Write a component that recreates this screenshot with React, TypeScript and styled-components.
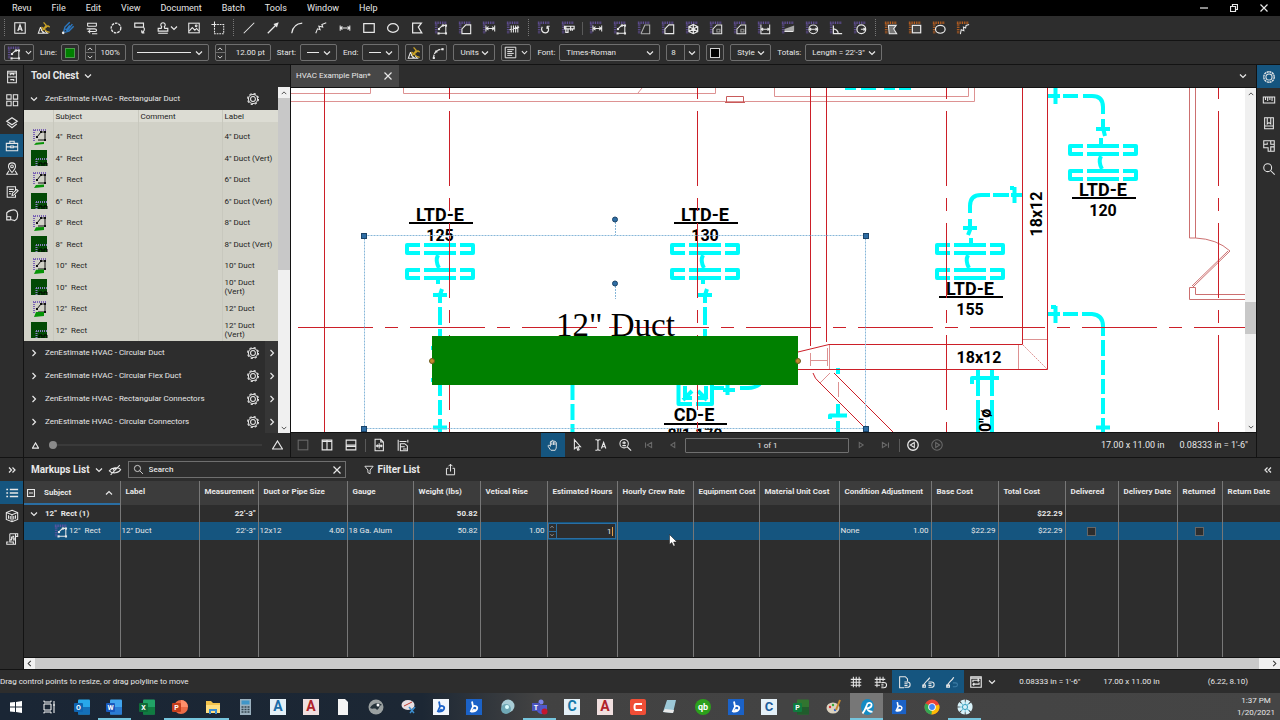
import React from 'react';
import styled, { createGlobalStyle, css } from 'styled-components';

const c = {
  bg: '#2d2d2d',
  raised: '#3c3c3c',
  edge: '#131313',
  line: '#777777',
  box: '#6f6f6f',
  text: '#e8e8e8',
  dim: '#6a6a6a',
  accent: '#15557f',
  purple: '#6a55a8',
  orange: '#d2691e',
};

const GlobalStyle = createGlobalStyle`
  * { box-sizing: border-box; }
  body {
    margin: 0;
    background: ${c.bg};
    color: ${c.text};
    font-family: Roboto, "Liberation Sans", sans-serif;
    font-size: 8px;
    line-height: 12px;
  }
  button, input, select {
    font: inherit;
    color: inherit;
    background: none;
    border: 0;
    padding: 0;
    margin: 0;
    min-width: 0;
  }
  button { display: flex; align-items: center; justify-content: center; }
  svg { display: block; flex: none; }
  table { border-collapse: collapse; }
`;

/* ---------- icons ---------- */

const Svg = styled.svg`
  fill: none;
  stroke: currentColor;
  stroke-width: 1.2;
`;

const solid = { fill: 'currentColor', stroke: 'none' };

function Ruler({ color = c.purple }: { color?: string }) {
  return (
    <g stroke={color} strokeWidth="3" strokeDasharray="1 1">
      <path d="M1 2H15" />
      <path d="M2.500 3V15" />
    </g>
  );
}

const nodes = (pts: number[][]) =>
  pts.map(([x, y]) => <rect key={`${x}-${y}`} x={x - 1} y={y - 1} width="2.400" height="2.400" {...solid} />);

const art: Record<string, React.ReactNode> = {
  textbox: (
    <>
      <rect x="2" y="2" width="12" height="12" />
      <path d="M5.500 11.500L8 4.500L10.500 11.500M6.500 9.300H9.500" strokeWidth="1.500" />
    </>
  ),
  penYellow: (
    <>
      <path d="M4 7L1.500 14H12L9.500 11.500M4 7L7 13.500M4.500 10.500L9 14" />
      <path d="M7.500 1.500L10.500 5L8 9L12.500 5.500L14.500 7M8 9L5 7M8 9L11 12L14.500 13M10.500 5L6 11" stroke="#c9a227" strokeWidth="1.500" />
    </>
  ),
  penBlue: (
    <>
      <path d="M3 12.500L4.500 7L10 1.500M4 13L9 11.500L14.500 6M5 9L7 11L13 3.500M6.500 9.500L10 5" stroke="#2b78c2" strokeWidth="1.600" />
      <circle cx="2.500" cy="13.500" r="1.500" {...solid} />
    </>
  ),
  note: <path d="M3 6V2.500H13V6M3 6H13M2 9H11C14 9 14 12 11 12H4L6 10M4 12L6 14M8 14.500H14" />,
  cloudCircle: <circle cx="8" cy="8" r="5.500" strokeDasharray="3 1" strokeWidth="1.500" />,
  callout: <path d="M2 2.500H12V7H2ZM12 7C14 9 13 12 10 13.500M10 13.500V10.500M10 13.500H13" strokeWidth="1.300" />,
  stamp: (
    <>
      <path d="M6 8.500L6.500 6.500A2.500 2.500 0 1 1 9.500 6.500L10 8.500H13.500V11.500H2.500V8.500Z" strokeWidth="1.300" />
      <path d="M2.500 14H13.500" />
    </>
  ),
  image: (
    <>
      <rect x="2" y="2.500" width="12" height="11" />
      <path d="M2.500 11.500L6 7.500L9 10.500L11 8.500L13.500 11.500" />
      <circle cx="10.500" cy="5.500" r="1" />
    </>
  ),
  snapshot: (
    <>
      <rect x="4" y="4" width="10.500" height="10.500" strokeDasharray="2 1" />
      <path d="M0.500 4H6M4 0.500V6" />
    </>
  ),
  line: <path d="M2 14L14 2" />,
  arrow: (
    <>
      <path d="M2 14L12 4" strokeWidth="1.400" />
      <path d="M14.500 1.500L8.500 3.500L12.500 7.500Z" {...solid} />
    </>
  ),
  arc: <path d="M2 14C3 7 7 3 14 2.500" strokeWidth="1.400" />,
  polyline: <path d="M2 14L4 9L7 10L5.500 6L10 7L9 4L14 2" />,
  dimension: <path d="M2.500 5V11M13.500 5V11M3 8H13M5 6L3 8L5 10M11 6L13 8L11 10" />,
  rect: <rect x="2" y="3" width="12" height="10" strokeWidth="1.400" />,
  ellipse: <ellipse cx="8" cy="8" rx="6.200" ry="5" strokeWidth="1.400" />,
  polygon: <path d="M3 2.500H13L9.500 7L13.500 13.500H3Z" strokeWidth="1.400" />,
  rPolylength: (
    <>
      <Ruler />
      <path d="M5 14H13.500V5H10L5.500 9" />
      {nodes([[5, 14], [13.5, 14], [13.5, 5], [10, 5], [5.5, 9]])}
    </>
  ),
  rArea: (
    <>
      <Ruler />
      <path d="M4.500 14.500V9L9 4.500H14.500V14.500Z" strokeWidth="1.300" />
    </>
  ),
  rPerimeter: (
    <>
      <Ruler />
      <path d="M4.500 14.500L9 4.500H14.500V14.500H4.500" stroke="#b0b0b0" />
    </>
  ),
  rLength: (
    <>
      <Ruler />
      <path d="M4.500 5V12M14.500 5V12M5 8.500H14M7.500 6.500L5 8.500L7.500 10.500M11.500 6.500L14 8.500L11.500 10.500" />
    </>
  ),
  rCount: (
    <>
      <Ruler />
      <path d="M6 5V13M8.500 5V13M11 5V13M13.500 5V13M4 10L15 7" />
    </>
  ),
  rRotate: (
    <>
      <Ruler />
      <path d="M6 6.500C4 10 6 13.500 9.500 13.500C13.500 13.500 14.500 8.500 11.500 6M11.500 6H14.500M11.500 6V9" strokeWidth="1.400" />
    </>
  ),
  rCaliper: (
    <>
      <Ruler />
      <path d="M4 6H15V9H4ZM5.500 6V13H8V9M11 6V11M13 9V11" strokeWidth="1.400" />
    </>
  ),
  rVolume: (
    <>
      <Ruler />
      <path d="M9.500 4L14.500 6.500V12L9.500 14.500L4.500 12V6.500ZM4.500 6.500L9.500 9L14.500 6.500M9.500 9V14.500M4.500 12L9.500 9L14.500 12M9.500 4V9" strokeWidth="1.400" />
    </>
  ),
  rCutout: (
    <>
      <Ruler />
      <path d="M4.500 14.500V9L9 4.500H14.500V14.500Z" />
      <path d="M9 12.500V9.500H12.500V12.500Z" stroke="#999999" />
    </>
  ),
  rWidth: (
    <>
      <Ruler />
      <path d="M4.500 4V14.500H14.500V4M5 9.500H14M7 8L5 9.500L7 11M12 8L14 9.500L12 11" />
    </>
  ),
  rSlope: (
    <>
      <Ruler />
      <path d="M4 12V9L15 5V12Z" fill="#a8a8a8" stroke="none" />
      <path d="M4 12H14" />
    </>
  ),
  rDiameter: (
    <>
      <Ruler />
      <circle cx="9.500" cy="9.500" r="5" />
      <path d="M5 9.500H14M7 8L5 9.500L7 11M12 8L14 9.500L12 11" />
    </>
  ),
  rAngle: (
    <>
      <Ruler />
      <path d="M5 5V14.500H15M5 9C8 9 10.500 11.500 10.500 14.500" strokeWidth="1.400" />
    </>
  ),
  rRadius: (
    <>
      <Ruler />
      <circle cx="9.500" cy="9.500" r="5" strokeWidth="1.400" />
      <path d="M9 9.500H14M12 8L14 9.500L12 11" />
    </>
  ),
  oPolygon: (
    <>
      <Ruler color={c.orange} />
      <path d="M5 5H14L11 9L14.500 14.500H6Z" fill="#777777" />
    </>
  ),
  oRect: (
    <>
      <Ruler color={c.orange} />
      <rect x="5" y="5" width="9.500" height="8.500" fill="#444444" strokeWidth="1.400" />
    </>
  ),
  oEllipse: (
    <>
      <Ruler color={c.orange} />
      <ellipse cx="9.500" cy="9.500" rx="5.500" ry="4.500" strokeWidth="1.400" />
    </>
  ),
  oPoly: (
    <>
      <Ruler color={c.orange} />
      <path d="M5 15L6 10L9 11L8.500 7L11 8L11.500 5L15 4" />
    </>
  ),
  thumbs: <path d="M2 2H7V7H2ZM9.500 2H14.500V7H9.500ZM2 9.500H7V14.500H2ZM9.500 9.500H14.500V14.500H9.500Z" />,
  fileCabinet: <path d="M3 1.500H13V14.500H3ZM3 8H13M6 4.500H10V6M6 6V4.500M6 11H10V12.500M3 3.500H13" />,
  layers: <path d="M8 2L14 6L8 10L2 6ZM2.500 9L8 13.500L13.500 9" strokeWidth="1.400" />,
  toolbox: <path d="M1.500 5H14.500V13.500H1.500ZM5.500 5V2.500H10.500V5M1.500 9H6.500M9.500 9H14.500M6.500 8H9.500V10H6.500Z" />,
  places: (
    <>
      <path d="M8 12C5 8.500 4 7 4 5A4 4 0 0 1 12 5C12 7 11 8.500 8 12Z" />
      <circle cx="8" cy="5" r="1.500" />
      <path d="M4.500 10L2 14H14L11.500 10" />
    </>
  ),
  editList: <path d="M12 6V2H2.500V14H12V11M4.500 5H10M4.500 7.500H9M4.500 10H7M8 12L8.500 9.500L13.500 5L15 6.500L10 11.500Z" />,
  shapes: <path d="M2 10V5.500C4 3 9 1.500 12 2.500C14.500 4 15 8 13.500 12.500L11 14.500C9.500 14 8 13 6.500 13.500V10ZM2 10V13.500H6.500" strokeWidth="1.300" />,
  list: <path d="M1.500 4H3.500M1.500 8H3.500M1.500 12H3.500M5.500 4H15M5.500 8H15M5.500 12H15" strokeWidth="1.800" />,
  model: <path d="M8 1.500L14.500 4V12L8 14.500L1.500 12V4ZM1.500 4L8 6.500L14.500 4M8 6.500V14.500M4 7V11M6 8V12M10 8V12M12 7V11" />,
  script: <path d="M5.500 2H14.500V5H12V14H2V11.500H4M5.500 2V11.500H9.500V14M12 5V2M7.500 5V9H6M10.500 5H9V7H10.500V9H9" />,
  rulerPanel: <path d="M1.500 4.500H14.500V11.500H1.500ZM4 4.500V8M6.500 4.500V9M9 4.500V8M11.500 4.500V9" />,
  bookmark: <path d="M3 2H13V14.500H3ZM6 2V9L8 7.500L10 9V2M3 11.500H13" />,
  compare: <path d="M2 2H14V9H10V14H7V10H2ZM2 6H6V4M10 2V6H14M10 14H14V9" />,
  search: (
    <>
      <circle cx="6.500" cy="6.500" r="4.500" />
      <path d="M10 10L14.500 14.500" />
    </>
  ),
  gear: (
    <>
      <circle cx="8" cy="8" r="5.200" />
      <circle cx="8" cy="8" r="6.200" strokeDasharray="2.500 2.370" strokeWidth="1.300" />
      <circle cx="8" cy="8" r="2.800" />
    </>
  ),
  single: <rect x="2.500" y="2.500" width="11" height="11" />,
  splitV: <path d="M2.500 2.500H13.500V13.500H2.500ZM8 2.500V13.500M2.500 4H13.500" strokeWidth="1.300" />,
  splitH: <path d="M2.500 2.500H13.500V13.500H2.500ZM2.500 8H13.500M2.500 9.500H13.500" strokeWidth="1.300" />,
  fitPage: <path d="M3.500 1.500H10L13 4.500V14.500H3.500ZM10 1.500V4.500H13M5 9H11.500M8.200 6V12M6.500 7.500L5 9L6.500 10.500M10 7.500L11.500 9L10 10.500" />,
  fitWidth: <path d="M2.500 2V14.500M13.500 2V5M4 4H12M5 6.500H10L13 9V14.500H5ZM5 10H10M8 12.500H12" />,
  hand: <path d="M5 13.500L2.500 9.500C2 8.500 3 8 4 8.500L5 9.500V4.500C5 3.500 6.500 3.500 6.500 4.500V3.500C6.500 2.500 8.200 2.500 8.200 3.500V4C8.200 3 10 3 10 4V5C10 4 11.800 4 11.800 5.500V10C11.800 12 11 13 10.500 14H5.500M6.700 5V8M8.500 4.500V8M10.200 5.500V8" strokeWidth="1.100" />,
  select: <path d="M5 2V12.500L7.500 10.500L9 14L10.500 13.300L9 10H12Z" />,
  selectText: <path d="M1.500 2H3.500L4.500 3L5.500 2H7.500M4.500 3V13M1.500 14H3.500L4.500 13L5.500 14H7.500M8.500 12L11 5L13.500 12M9.500 10H12.500" strokeWidth="1.300" />,
  zoom: (
    <>
      <circle cx="7" cy="6.500" r="4.800" />
      <path d="M10.500 10L15 14.500M5 5.500H9M7 3.800V7.200M5 8.700H9" strokeWidth="1.300" />
    </>
  ),
  first: <path d="M4 5V11M11 5V11L6 8Z" />,
  prev: <path d="M10 5V11L5.500 8Z" />,
  next: <path d="M6 5V11L10.500 8Z" />,
  last: <path d="M12 5V11M5 5V11L10 8Z" />,
  back: (
    <>
      <circle cx="8" cy="8" r="6" strokeWidth="1.500" />
      <path d="M9.500 5.200V10.800L5 8Z" />
    </>
  ),
  forward: (
    <>
      <circle cx="8" cy="8" r="6" />
      <path d="M6.500 5.200V10.800L11 8Z" />
    </>
  ),
  eyeOff: <path d="M1.500 9C4 5 12 4 14.500 7.500C12 12 5 12.500 1.500 9ZM13.500 2.500L3 13.500M6 8.500A2 2 0 0 1 9.500 7" />,
  filter: <path d="M2.500 3H13.500L9.500 8V13L6.500 11.500V8Z" />,
  share: <path d="M5.500 6.500H3V14.500H13V6.500H10.500M8 10.500V1.500M5.500 4L8 1.500L10.500 4" />,
  grid: <path d="M5 2V14M8.300 2V14M11.600 2V14M2 5H14M2 8.300H14M2 11.600H14" />,
  gridSnap: <path d="M4.500 2V14M8 2V9M11.500 2V7M2 5H14M2 8.300H9M2 11.600H8M9.500 8.500H12.500A2.500 2.500 0 0 1 12.500 14.500H9.500M9.500 10.500H12M9.500 12.500H12" />,
  pageSnap: <path d="M8 14.500H3V2H9.500L12 4.500V7M8.500 8H12A3 3 0 0 1 12 14H8.500M8.500 10H12M8.500 12H12" />,
  markupSnap: <path d="M3 13C3 8 7 8 10 3M2 11.500H5V14H2ZM8.500 8H12A3 3 0 0 1 12 14H8.500M8.500 10H12M8.500 12H12" />,
  curveSnap: (
    <>
      <path d="M3 13C3 8 7 8 10 2.500M2 11.500H5V14H2Z" strokeWidth="1.400" />
      <path d="M9 9H12A2 2 0 0 1 12 13.500H9" stroke="#3d7da6" />
    </>
  ),
  sync: <path d="M2 2H14V14H2ZM2 3.500H14M4.500 8V6H11.500M10 4.500L11.500 6L10 7.500M11.500 8.500V10.500H4.500M6 9L4.500 10.500L6 12" strokeWidth="1.300" />,
  align: <path d="M1.500 1.500H14.500V14.500H1.500ZM4 4.500H12M4 6.800H10M4 9.100H12M4 11.500H10" />,
  curve: (
    <>
      <path d="M3 14C3 8 6 4 14 3.500" strokeDasharray="4 1" strokeWidth="1.400" />
      {nodes([[3, 13.5], [6, 6], [13, 3.5]])}
    </>
  ),
  profile: (
    <>
      <circle cx="8" cy="8" r="6" strokeDasharray="2.500 0.600" strokeWidth="1.500" />
      <circle cx="8" cy="8" r="3.500" />
    </>
  ),
};

function Icon({ name, size = 16, color }: { name: string; size?: number; color?: string }) {
  return (
    <Svg viewBox="0 0 16 16" width={size} height={size} color={color} aria-hidden="true">
      {art[name]}
    </Svg>
  );
}

const turns = { down: 0, up: 180, left: 90, right: 270 };

function Chevron({ to = 'down', size = 8 }: { to?: keyof typeof turns; size?: number }) {
  return (
    <Svg viewBox="0 0 8 8" width={size} height={size} aria-hidden="true">
      <path d="M1 2.500L4 5.500L7 2.500" transform={`rotate(${turns[to]} 4 4)`} />
    </Svg>
  );
}

function DoubleChevron({ to }: { to: 'left' | 'right' }) {
  return (
    <Svg viewBox="0 0 8 8" width="8" height="8" aria-hidden="true">
      <path d={to === 'right' ? 'M1 1.500L3.500 4L1 6.500M4.500 1.500L7 4L4.500 6.500' : 'M3.500 1.500L1 4L3.500 6.500M7 1.500L4.500 4L7 6.500'} />
    </Svg>
  );
}

function Cross({ size = 8 }: { size?: number }) {
  return (
    <Svg viewBox="0 0 8 8" width={size} height={size} aria-hidden="true">
      <path d="M0.500 0.500L7.500 7.500M7.500 0.500L0.500 7.500" />
    </Svg>
  );
}

/* ---------- shell ---------- */

const Shell = styled.div`
  display: flex;
  flex-direction: column;
  height: 100vh;
  min-height: 560px;
  overflow: hidden;
`;

const MenuBar = styled.header`
  display: flex;
  align-items: center;
  height: 16px;
  padding: 0 12px;
  background: #000;
  font-size: 9px;
`;
const MenuList = styled.nav`
  display: flex;
  gap: 20px;
  flex: 1;
`;
const WindowButtons = styled.div`
  display: flex;
  gap: 22px;
`;

const Toolbar = styled.div`
  display: flex;
  align-items: center;
  height: 25px;
  border-bottom: 1px solid ${c.edge};
`;
const ToolButton = styled.button<{ $wide?: boolean; $active?: boolean; $dim?: boolean }>`
  flex: none;
  width: ${(p) => (p.$wide ? 30 : 24)}px;
  height: 24px;
  background: ${(p) => (p.$active ? c.accent : 'none')};
  color: ${(p) => (p.$dim ? c.dim : c.text)};
`;
const Grip = styled.span`
  flex: none;
  width: 7px;
  height: 18px;
  background: linear-gradient(#777 50%, transparent 50%) center / 1px 2px repeat-y;
  &:first-child { width: 8px; }
`;
const Divider = styled.span`
  flex: none;
  width: 1px;
  height: 13px;
  margin: 0 1px 0 2px;
  background: #5a5a5a;
`;

const PropertyBar = styled(Toolbar)`
  height: 24px;
  gap: 6px;
  padding-left: 4px;
`;
const boxed = css`
  display: flex;
  align-items: center;
  height: 17px;
  border: 1px solid ${c.box};
  border-radius: 2px;
`;
const Field = styled.div`
  display: flex;
  align-items: center;
  gap: 4px;
`;
const BoxButton = styled.button<{ $w?: number }>`
  ${boxed}
  width: ${(p) => p.$w ?? 18}px;
  gap: 4px;
`;
const Swatch = styled.span<{ $color: string; $edge: string }>`
  width: 10px;
  height: 10px;
  background: ${(p) => p.$color};
  border: 1px solid ${(p) => p.$edge};
`;
const SelectFrame = styled.div<{ $w: number }>`
  ${boxed}
  width: ${(p) => p.$w}px;
  padding: 0 5px 0 6px;
  select { flex: 1; appearance: none; outline: 0; }
  svg { pointer-events: none; }
`;
const SplitFrame = styled(SelectFrame)`
  padding: 0 3px 0 4px;
  select { height: 15px; border-right: 1px solid ${c.box}; margin-right: 3px; }
`;
const Spinner = styled.div<{ $w: number }>`
  ${boxed}
  width: ${(p) => p.$w}px;
  input { flex: 1; text-align: right; padding-right: 5px; outline: 0; }
`;
const SpinButtons = styled.div`
  display: grid;
  width: 10px;
  height: 15px;
  border-right: 1px solid ${c.box};
  button + button { border-top: 1px solid ${c.box}; }
`;
const Stroke = styled.span<{ $w: number }>`
  width: ${(p) => p.$w}px;
  height: 1px;
  background: ${c.text};
`;

/* ---------- workspace ---------- */

const Workspace = styled.main`
  display: flex;
  flex: 1;
  min-height: 0;
`;
const Rail = styled.nav`
  flex: none;
  display: flex;
  flex-direction: column;
  width: 24px;
  border-right: 1px solid ${c.edge};
`;
const RightRail = styled(Rail)`
  border-right: 0;
  border-left: 1px solid ${c.edge};
`;
const RailButton = styled.button<{ $active?: boolean }>`
  width: 100%;
  height: 23px;
  background: ${(p) => (p.$active ? c.accent : 'none')};
`;
const ChestPanel = styled.section`
  flex: none;
  display: flex;
  flex-direction: column;
  width: 267px;
  border-right: 1px solid ${c.edge};
`;
const PanelTitle = styled.h2`
  display: flex;
  align-items: center;
  gap: 5px;
  height: 22px;
  margin: 0;
  padding-left: 7px;
  font-size: 10px;
  font-weight: 700;
`;
const ChestBody = styled.div`
  display: flex;
  flex: 1;
  min-height: 0;
`;
const ChestList = styled.div`
  flex: 1;
  overflow: hidden;
`;
const GroupHeader = styled.div<{ $open?: boolean }>`
  display: flex;
  align-items: center;
  height: 23px;
  padding: 0 ${(p) => (p.$open ? 13 : 0)}px 0 6px;
  > button:first-child { flex: 1; justify-content: flex-start; gap: 7px; }
`;
const GearButton = styled.button`
  width: 24px;
  height: 23px;
`;
const Flyout = styled.button`
  width: 13px;
  height: 23px;
  background: #363636;
`;
const ToolTable = styled.table`
  width: 100%;
  height: 231px;
  table-layout: fixed;
  background: #d1d1c7;
  color: #222;
  line-height: 9px;
  th, td {
    padding: 0 2px;
    text-align: left;
    white-space: pre;
    border-left: 1px solid #c8c8be;
  }
  th:first-child, td:first-child { border-left: 0; padding: 0 0 0 6px; }
  td:last-child { white-space: pre-wrap; padding-right: 4px; }
  th {
    height: 16px;
    background: linear-gradient(#dcdcd3 12px, #d1d1c7 12px);
    font-weight: 400;
    line-height: 14px;
    vertical-align: top;
  }
`;
const ScrollV = styled.div<{ $w: number }>`
  flex: none;
  display: flex;
  flex-direction: column;
  align-items: center;
  width: ${(p) => p.$w}px;
  background: #f0f0f0;
  color: #444;
  button { width: 100%; height: 11px; }
`;
const ThumbV = styled.span<{ $grow: number }>`
  width: 100%;
  background: #c8c8c8;
  flex: ${(p) => p.$grow};
`;
const Gap = styled.span<{ $grow: number }>`
  flex: ${(p) => p.$grow};
`;
const SizeRow = styled.div`
  display: flex;
  align-items: center;
  gap: 10px;
  height: 24px;
  padding: 0 7px 0 8px;
  input {
    flex: 1;
    appearance: none;
    height: 2px;
    background: #3a3a3a;
  }
  input::-webkit-slider-thumb {
    appearance: none;
    width: 8px;
    height: 8px;
    border-radius: 4px;
    background: #8a8a8a;
  }
`;

const DocPanel = styled.section`
  flex: 1;
  display: flex;
  flex-direction: column;
  min-width: 0;
`;
const TabStrip = styled.div`
  display: flex;
  align-items: center;
  justify-content: space-between;
  height: 23px;
  padding-right: 9px;
  border-bottom: 1px solid ${c.edge};
`;
const Tab = styled.div`
  display: flex;
  align-items: center;
  justify-content: space-between;
  width: 108px;
  height: 22px;
  padding: 0 7px 0 5px;
  background: #474747;
`;
const Viewport = styled.div`
  display: flex;
  flex: 1;
  min-height: 0;
`;
const Sheet = styled.svg`
  flex: 1;
  min-width: 0;
  width: 100%;
  height: 100%;
  background: #fff;
`;
const NavBar = styled.div`
  display: flex;
  align-items: center;
  height: 25px;
  border-top: 1px solid ${c.edge};
  font-size: 9px;
`;
const PageInput = styled.input`
  width: 164px;
  height: 15px;
  border: 1px solid ${c.box};
  border-radius: 1px;
  text-align: center;
  font-size: 8px;
`;
const NavInfo = styled.span`
  margin-right: 15px;
  & + & { margin-right: 8px; }
`;

/* ---------- markups ---------- */

const Markups = styled.section`
  flex: none;
  display: flex;
  height: 213px;
  border-top: 1px solid ${c.edge};
  border-bottom: 1px solid ${c.edge};
`;
const MarkupsBody = styled.div`
  flex: 1;
  display: flex;
  flex-direction: column;
  min-width: 0;
`;
const MarkupsBar = styled.div`
  display: flex;
  align-items: center;
  height: 23px;
  padding-right: 8px;
`;
const HideButton = styled.button`
  width: 25px;
  height: 23px;
`;
const SearchBox = styled.label`
  display: flex;
  align-items: center;
  gap: 5px;
  width: 218px;
  height: 17px;
  padding: 0 4px;
  border: 1px solid ${c.box};
  input { flex: 1; outline: 0; font-weight: 500; }
  input::placeholder { color: ${c.text}; opacity: 1; }
`;
const FilterButton = styled.button`
  gap: 3px;
  margin: 0 24px 0 17px;
  font-size: 10px;
  font-weight: 700;
`;
const Grow = styled.span`
  flex: 1;
`;
const GridFrame = styled.div`
  flex: 1;
  min-height: 0;
`;
const Grid = styled.table`
  width: 100%;
  height: 100%;
  table-layout: fixed;
  white-space: pre;
  th, td { border-right: 1px solid ${c.line}; }
  th:last-child, td:last-child { border-right: 0; }
`;
const HeadCell = styled.th`
  height: 24px;
  padding: 0 0 2px 5px;
  background: ${c.raised};
  font-weight: 700;
  text-align: left;
  overflow: hidden;
  &:first-child { box-shadow: inset 0 -2px #2a6ea3; padding: 0 7px 0 3px; }
`;
const SortHead = styled.div`
  display: flex;
  align-items: center;
  gap: 9px;
  svg:last-child { margin-left: auto; }
`;
const Row = styled.tr<{ $kind: 'group' | 'selected' | 'empty' }>`
  ${(p) => p.$kind === 'group' && css`height: 17px; font-weight: 700;`}
  ${(p) => p.$kind === 'selected' && css`height: 18px; background: ${c.accent};`}
`;
const Cell = styled.td<{ $align?: string }>`
  padding: 0 2px 0 1px;
  text-align: ${(p) => p.$align ?? 'left'};
  position: relative;
`;
const Spread = styled.div`
  display: flex;
  justify-content: space-between;
`;
const TreeLabel = styled.div<{ $gap: number; $indent: number }>`
  display: flex;
  align-items: center;
  gap: ${(p) => p.$gap}px;
  padding-left: ${(p) => p.$indent}px;
`;
const HourEditor = styled.div`
  display: flex;
  align-items: center;
  height: 16px;
  margin: 0 -1px;
  background: ${c.bg};
  border: 1px solid #2a6ea3;
  input { flex: 1; height: 14px; text-align: right; outline: 0; }
`;
const Caret = styled.span`
  width: 1px;
  height: 9px;
  margin-right: 2px;
  background: #e0a050;
`;
const HourSpin = styled.div`
  display: grid;
  width: 8px;
  height: 14px;
  border-right: 1px solid #2a6ea3;
  button + button { border-top: 1px solid #2a6ea3; }
`;
const Tick = styled.input`
  appearance: none;
  display: block;
  width: 9px;
  height: 9px;
  margin: 0 auto;
  border: 1px solid #666;
  background: ${c.bg};
`;
const Pointer = styled.svg`
  position: absolute;
  left: 51px;
  top: 12px;
`;
const ScrollH = styled.div`
  display: flex;
  height: 12px;
  border-top: 1px solid ${c.edge};
  background: #f0f0f0;
  color: #333;
  button { width: 11px; }
`;
const ThumbH = styled.span`
  flex: 1;
  margin-right: 10px;
  background: #cacaca;
`;

const StatusBar = styled.footer`
  display: flex;
  align-items: center;
  height: 23px;
`;
const StatusInfo = styled.span`
  margin-left: 23px;
`;
const Coordinates = styled.span`
  margin: 0 32px 0 48px;
`;

/* ---------- desktop taskbar ---------- */

const Taskbar = styled.footer`
  display: flex;
  align-items: center;
  justify-content: space-between;
  height: 27px;
  padding-right: 5px;
  background: linear-gradient(90deg, #1a2635 0%, #1c2734 33%, #424242 42%, #454545 100%);
`;
const Apps = styled.div`
  display: flex;
  flex: 0 1 981px;
`;
const AppButton = styled.button<{ $open?: boolean; $front?: boolean }>`
  flex: 1;
  height: 27px;
  background: ${(p) => (p.$front ? '#777' : 'none')};
  ${(p) => p.$open && css`box-shadow: inset 0 -2px #76c5dd;`}
`;
const Clock = styled.time`
  text-align: center;
`;

const TileText = styled.text`
  font-family: Roboto, sans-serif;
  font-weight: 700;
  text-anchor: middle;
`;

function Tile({ bg, fg, letter, size = 11 }: { bg: string; fg: string; letter: string; size?: number }) {
  return (
    <>
      <rect width="16" height="16" fill={bg} />
      <TileText x="8" y="12" fontSize={size} fill={fg}>{letter}</TileText>
    </>
  );
}

function Office({ a, b, d, letter }: { a: string; b: string; d: string; letter: string }) {
  return (
    <>
      <rect x="4" y="0.500" width="12" height="15" rx="1" fill={a} />
      <rect x="4" y="8" width="12" height="7.500" fill={b} />
      <rect x="0" y="4" width="9" height="9" rx="1" fill={d} />
      <TileText x="4.500" y="11" fontSize="7" fill="#fff">{letter}</TileText>
    </>
  );
}

const swirl = (color: string) => (
  <path d="M6 2.500L7 7.500L4.500 13M7 7.500C9 6 12 7.500 11 10C10 12 8.500 12.500 6.500 12.500L8.500 10" stroke={color} strokeWidth="1.800" fill="none" />
);

const apps: { name: string; open?: boolean; front?: boolean; art: React.ReactNode }[] = [
  { name: 'Start', art: <path d="M2 3.500L7 3V7.500H2ZM8 3L14 2V7.500H8ZM2 8.500H7V13L2 12.500ZM8 8.500H14V14L8 13Z" fill="#fff" /> },
  { name: 'Task view', art: <path d="M3 5H10V11H3ZM3 1.500V3H10V1.500M3 14.500V13H10V14.500M13 2V14M12 6H14" stroke="#fff" fill="none" /> },
  { name: 'Outlook', art: <Office a="#28a8ea" b="#1470b8" d="#0f64b0" letter="O" /> },
  { name: 'Word', open: true, art: <Office a="#41a5ee" b="#2b7cd3" d="#185abd" letter="W" /> },
  { name: 'Excel', art: <Office a="#21a366" b="#107c41" d="#0e6b38" letter="X" /> },
  { name: 'PowerPoint', open: true, art: (
    <>
      <circle cx="9" cy="8" r="7" fill="#ed6c47" />
      <path d="M9 1A7 7 0 0 1 16 8H9Z" fill="#ff8f6b" />
      <rect x="0" y="4" width="9" height="9" rx="1" fill="#c43e1c" />
      <TileText x="4.500" y="11" fontSize="7" fill="#fff">P</TileText>
    </>
  ) },
  { name: 'File Explorer', open: true, art: (
    <>
      <path d="M1 2H6L8 4H15V14H1Z" fill="#f2c24c" />
      <path d="M1 6H15V14H1Z" fill="#ffdf80" />
      <path d="M4 15V10H12V15H10V12H6V15Z" fill="#3d8fd1" />
    </>
  ) },
  { name: 'Calculator', art: (
    <>
      <rect x="3" y="0" width="11" height="16" fill="#9ab0be" />
      <rect x="4.500" y="1.500" width="8" height="4" fill="#3f96c8" />
      <path d="M4.500 8H12.500M4.500 10.500H12.500M4.500 13H12.500" stroke="#33444f" strokeWidth="1.500" strokeDasharray="2 1" />
    </>
  ) },
  { name: 'Autodesk blue', art: <Tile bg="#e4f0f7" fg="#1b6ca8" letter="A" size={14} /> },
  { name: 'AutoCAD', art: <Tile bg="#f0dfdf" fg="#b0232a" letter="A" size={14} /> },
  { name: 'Document', art: <path d="M3 0H10L13 3V16H3Z" fill="#f4f4f4" /> },
  { name: 'Eagle viewer', art: (
    <>
      <circle cx="8" cy="8" r="7.500" fill="#9aa0a0" />
      <path d="M2 9C4 4 11 3 14 6C11 6 12 9 9 11C7 8 5 11 2 9Z" fill="#26333a" />
      <circle cx="10" cy="6" r="1.500" fill="#fff" />
    </>
  ) },
  { name: 'Snipping Tool', art: (
    <>
      <ellipse cx="7" cy="6" rx="6.500" ry="5" fill="#e8dfe2" />
      <path d="M3 7L11 3" stroke="#c0392b" />
      <path d="M8 8L13 14M14 8L9 14" stroke="#3c8fd0" strokeWidth="1.500" />
    </>
  ) },
  { name: 'Bluebeam', art: <><rect width="16" height="16" fill="#f3f7fc" />{swirl('#1c62c9')}</> },
  { name: 'Bluebeam admin', art: <><rect width="16" height="16" fill="#1b62c7" />{swirl('#fff')}</> },
  { name: 'Disc', art: (
    <>
      <circle cx="9" cy="7" r="6.500" fill="#a9cdd6" />
      <circle cx="7" cy="10" r="5" fill="#6fa8b5" />
      <circle cx="8" cy="8" r="2" fill="#dff" />
    </>
  ) },
  { name: 'Teams', open: true, art: (
    <>
      <circle cx="9" cy="3" r="2.500" fill="#7b83eb" />
      <path d="M5 6H15V12C13 16 7 16 5 12Z" fill="#5059c9" />
      <rect x="0" y="4" width="8" height="8" fill="#4b53bc" />
      <TileText x="4" y="10.500" fontSize="7" fill="#fff">T</TileText>
      <circle cx="12.500" cy="12.500" r="3" fill="#c4162d" />
    </>
  ) },
  { name: 'Civil 3D', art: <Tile bg="#e4f0f7" fg="#1277a8" letter="C" size={14} /> },
  { name: 'AutoCAD 2021', art: <Tile bg="#f0dfdf" fg="#b0232a" letter="A" size={14} /> },
  { name: 'Recorder', art: (
    <>
      <rect width="16" height="16" rx="2" fill="#f04e36" />
      <path d="M12 5H6C4 5 4 11 6 11H12" stroke="#fff" strokeWidth="2" fill="none" />
    </>
  ) },
  { name: 'Notepad', art: <><path d="M5 1H14L11 14L1 13Z" fill="#9cc7d6" /><path d="M1 13L11 14L12 11L3 10Z" fill="#e9e9e9" /></> },
  { name: 'QuickBooks', art: (
    <>
      <circle cx="8" cy="8" r="8" fill="#2ca01c" />
      <TileText x="8" y="11" fontSize="9" fill="#fff">qb</TileText>
    </>
  ) },
  { name: 'Bluebeam Studio', art: <><rect width="16" height="16" fill="#1b62c7" />{swirl('#fff')}</> },
  { name: 'Autodesk C', art: <Tile bg="#e4f0f7" fg="#1b5c9c" letter="C" size={13} /> },
  { name: 'Project', art: <Office a="#31752f" b="#215c2c" d="#0f7b3f" letter="P" /> },
  { name: 'Paint', art: (
    <>
      <ellipse cx="7" cy="9" rx="6.500" ry="5.500" fill="#dcd3c0" />
      <circle cx="4" cy="8" r="1.200" fill="#d33" />
      <circle cx="7" cy="6" r="1.200" fill="#3a3" />
      <circle cx="9" cy="11" r="1.200" fill="#36c" />
      <path d="M14 1L10 11" stroke="#c98a2e" strokeWidth="2" />
    </>
  ) },
  { name: 'Revu', open: true, front: true, art: (
    <>
      <ellipse cx="8.500" cy="8" rx="6.500" ry="8" fill="#148bc4" />
      <path d="M3.500 14.500C6 12 7 8 8.500 4.500C13 2 15 8 8 9.500C9.500 12 11 13.500 13.500 12.500" stroke="#fff" strokeWidth="1.800" fill="none" />
    </>
  ) },
  { name: 'Bluebeam Vu', art: <g transform="translate(1 1) scale(0.88)"><rect width="16" height="16" fill="#1b62c7" />{swirl('#fff')}</g> },
  { name: 'Chrome', art: (
    <>
      <circle cx="8" cy="8" r="7.500" fill="#ea4335" />
      <path d="M8 8L1.500 4.200A7.500 7.500 0 0 0 8 15.500Z" fill="#34a853" />
      <path d="M8 8L15 5.500A7.500 7.500 0 0 1 7.500 15.500Z" fill="#fbbc05" />
      <circle cx="8" cy="8" r="3.800" fill="#fff" />
      <circle cx="8" cy="8" r="2.900" fill="#4285f4" />
    </>
  ) },
  { name: 'Meeting', open: true, art: (
    <>
      <circle cx="8" cy="8" r="5.300" stroke="#d8f1f8" strokeWidth="4.600" strokeDasharray="3.400 0.760" fill="#3aa3c2" />
      <circle cx="8" cy="8" r="2" fill="#d8f1f8" />
    </>
  ) },
];

/* ---------- plan drawing ---------- */

const PlanText = styled.text`
  font-family: Roboto, "Liberation Sans", sans-serif;
  font-weight: 700;
  font-size: 16px;
  text-anchor: middle;
  fill: #000;
`;
const TagText = styled(PlanText)`
  font-size: 18px;
`;
const DuctText = styled.text`
  font-family: "Liberation Serif", "Times New Roman", serif;
  font-size: 33px;
  fill: #000;
`;

function Diffuser({ x, y, down }: { x: number; y: number; down?: boolean }) {
  return (
    <g transform={`translate(${x} ${y})`}>
      {[0, 25].map((dy) => (
        <path key={dy} d={`M-20 ${dy}H-33V${dy + 8}H-20M-16 ${dy}H16M-16 ${dy + 8}H16M20 ${dy}H33V${dy + 8}H20`} />
      ))}
      <path d="M-2 10Q-5 16 -1 23" />
      {down && <path d="M-2 34V39M2 44L0 50V58M-7 50H7" />}
    </g>
  );
}

function Tag({ x, y, id }: { x: number; y: number; id: string }) {
  return (
    <g>
      <TagText x={x} y={y}>LTD-E</TagText>
      <path d={`M${x - 31} ${y + 2}H${x + 33}`} stroke="#000" strokeWidth="2" />
      <PlanText x={x} y={y + 20}>{id}</PlanText>
    </g>
  );
}

function Plan() {
  return (
    <Sheet role="img" aria-label="HVAC plan sheet">
      <g transform="translate(-291 -88)" fill="none">
        <g stroke="#dd9292">
          <path d="M291 93.500H370.500V88M403.500 88V93.500H715.500V88M638 93L642 88M774.500 88V96.500H968.500V88M291 101.500H974.500V88" />
          <path d="M726.500 102V96.500H743.500V102M725 102.500H745" stroke="#c85a5a" />
          <path d="M810.500 353V366M827.500 348V366M829.500 345V369M811 360.500H827M1018.500 345V369M1023 339.500H1047M820 383L830 373M838.500 382V397" />
          <path d="M1023 345L1047 369" strokeDasharray="2 1" />
          <path d="M1189.500 88V238H1195.500V88M1195.500 238Q1217 239 1230 251L1193 287M1228 251L1192 286M1245 294.500H1195.500V287.500H1189.500V299.500H1245" stroke="#cc7070" />
        </g>
        <g stroke="#00fbfb" strokeWidth="4" strokeLinejoin="round">
          <path d="M845 88H856M861 88H876M884 88H895M899 88H911" />
          <Diffuser x={440} y={245} down />
          <Diffuser x={705} y={245} down />
          <Diffuser x={970} y={245} />
          <Diffuser x={1103} y={146} />
          <path d="M440 307V325M440 329V336M440 385V396M440 400V415M440 419V432M433 427.500H447M705 307V325M705 329V336M433 346V350M433 378V382" />
          <path d="M572.500 385V400M572.500 404V420M572.500 424V432" />
          <path d="M970 213V206Q970 195 981 195H990M993 195H1009M1011 195H1023M1014.500 187V203M1010 188H1014M970 219V230L968 235M963 228H977M971 238V244" />
          <path d="M1047 96H1060M1055.500 88V104M1063 96H1078M1083 96H1092Q1103 96 1103 107V114M1103 119V128L1105 136M1096 129H1110M1101 138V144" />
          <path d="M1047 314H1060M1055.500 306V323M1051 307H1056M1063 314H1078M1082 314H1092Q1103 315 1103 326V336M1103 340V356M1103 360V375M1103 379V394M1103 398V414M1103 418V432M1096 427.500H1110" />
          <path d="M678.500 385V404H692M696 404H712V385M685 386V398H692M697 398H706V386M683 400L692 391M707 400L698 391M713 388H724M727.500 385V395M723 390H735M740 388H748Q755 388 760 384" />
          <path d="M838 368V374M838 404V414M838 421V432M830 419V415.500H847" />
          <path d="M978 369V396M992 369V396M978 400V432M992 400V432M972 384V378H999" />
        </g>
        <Tag x={440} y={221} id="125" />
        <Tag x={705} y={221} id="130" />
        <Tag x={970} y={295} id="155" />
        <Tag x={1103} y={196} id="120" />
        <TagText x="694" y="421">CD-E</TagText>
        <path d="M664 424H727" stroke="#000" strokeWidth="2" />
        <PlanText x="695" y="440">8"1 170</PlanText>
        <PlanText x="979" y="363">18x12</PlanText>
        <PlanText transform="translate(1042 214) rotate(-90)">18x12</PlanText>
        <PlanText transform="translate(991 425) rotate(-90)">10"ø</PlanText>
        <g stroke="#cc1f28">
          <path d="M324.500 88V432M810.500 88V346M826.500 88V342" />
          <path d="M449.500 -1V432M697.500 -1V432M946.500 -1V432M1218.500 -1V432" strokeDasharray="75 12 13 12" />
          <path d="M298 327.500H1245" strokeDasharray="75 12 13 12" />
          <path d="M798 352L829 344.500H1022.500V88M798 369.500H1047.500V88M813 373Q815 379 819 382L866 429M834 373L893 432" />
        </g>
        <DuctText x="556" y="336">12" Duct</DuctText>
        <rect x="432" y="336" width="366" height="49" fill="#008000" />
        <g stroke="#86b6d8" strokeDasharray="2 1">
          <rect x="364.500" y="235.500" width="501" height="193" />
          <path d="M615.500 222V235M615.500 286V299" />
        </g>
        <g fill="#2e6da4" stroke="#1c4468">
          {[364, 866].map((x) => [236, 429].map((y) => <rect key={`${x}${y}`} x={x - 2.5} y={y - 2.5} width="5" height="5" />))}
          <circle cx="615" cy="219.500" r="2.500" />
          <circle cx="615" cy="283.500" r="2.500" />
        </g>
        <g fill="#c08a2c" stroke="#6b5a1c">
          <circle cx="432" cy="361" r="2.500" />
          <circle cx="798" cy="361" r="2.500" />
        </g>
      </g>
    </Sheet>
  );
}

/* ---------- data ---------- */

const menus = ['Revu', 'File', 'Edit', 'View', 'Document', 'Batch', 'Tools', 'Window', 'Help'];

const tools = [
  '|', 'textbox', 'penYellow', 'penBlue', 'note', 'cloudCircle', 'callout', 'stamp', 'image', 'snapshot',
  '|', 'line', 'arrow', 'arc', 'polyline', 'dimension', 'rect', 'ellipse', 'polygon', 'rPolylength', 'rArea', 'rLength', 'rCount',
  '|', 'rRotate', 'rCaliper', '/', 'rLength', 'rPolylength', 'rPerimeter', 'rArea', 'rVolume', 'rCutout', 'rCutout', 'rWidth',
  'rSlope', 'rDiameter', 'rAngle', 'rRadius', '|', 'oPolygon', 'oRect', 'oEllipse', 'oPoly',
];

const sizes = [4, 6, 8, 10, 12];
const otherGroups = ['Circular Duct', 'Circular Flex Duct', 'Rectangular Connectors', 'Circular Connectors'];

type Column = { title: string; width?: number };
const columns: Column[] = [
  { title: 'Subject', width: 96 },
  { title: 'Label', width: 79 },
  { title: 'Measurement', width: 59 },
  { title: 'Duct or Pipe Size', width: 89 },
  { title: 'Gauge', width: 66 },
  { title: 'Weight (lbs)', width: 67 },
  { title: 'Vetical Rise', width: 67 },
  { title: 'Estimated Hours', width: 70 },
  { title: 'Hourly Crew Rate', width: 76 },
  { title: 'Equipment Cost', width: 66 },
  { title: 'Material Unit Cost', width: 80 },
  { title: 'Condition Adjustment', width: 92 },
  { title: 'Base Cost', width: 67 },
  { title: 'Total Cost', width: 67 },
  { title: 'Delivered', width: 53 },
  { title: 'Delivery Date', width: 59 },
  { title: 'Returned', width: 45 },
  { title: 'Return Date' },
];

function DuctThumb({ vertical, size }: { vertical: boolean; size: number }) {
  return vertical ? (
    <svg width="18" height="18" viewBox="0 0 18 18" aria-hidden="true">
      <rect x="1" y="1" width="16" height="16" fill="#034a05" />
      <path d="M6 10H18M6.500 10V17" stroke="#8a7fc0" strokeDasharray="1 1" strokeWidth="2" />
      <path d="M9 17V14H12V17M14 17V14H17V17" stroke="#000" fill="none" />
    </svg>
  ) : (
    <svg width="18" height="18" viewBox="0 0 18 18" aria-hidden="true">
      <path d="M3 2H16M4 2V14" stroke="#7a62b5" strokeDasharray="1 1" strokeWidth="2" />
      <path d="M7 9L11 4H15V12H8" stroke="#111" fill="none" />
      {[[7, 9], [11, 4], [15, 4], [15, 12]].map(([x, y]) => <rect key={`${x}-${y}`} x={x - 1} y={y - 1} width="2" height="2" fill="#111" />)}
      <path d={`M4 17L6 ${16 - size / 3}L14 ${15 - size / 4}V16Z`} fill="#069306" />
    </svg>
  );
}

function MainToolbar() {
  return (
    <Toolbar role="toolbar" aria-label="Markup tools">
      {tools.map((name, i) => {
        if (name === '|') return <Grip key={i} />;
        if (name === '/') return <Divider key={i} />;
        return (
          <ToolButton key={i} $wide={name === 'stamp'} aria-label={name}>
            <Icon name={name} size={14} />
            {name === 'stamp' && <Chevron />}
          </ToolButton>
        );
      })}
    </Toolbar>
  );
}

function SpinBox({ width, value, label }: { width: number; value: string; label: string }) {
  return (
    <Spinner $w={width}>
      <SpinButtons>
        <button aria-label={`Increase ${label}`}><Chevron to="up" size={6} /></button>
        <button aria-label={`Decrease ${label}`}><Chevron size={6} /></button>
      </SpinButtons>
      <input aria-label={label} defaultValue={value} />
    </Spinner>
  );
}

function Picker({ id, width, value }: { id: string; width: number; value: string }) {
  return (
    <SelectFrame $w={width}>
      <select id={id} aria-label={id}><option>{value}</option></select>
      <Chevron />
    </SelectFrame>
  );
}

function Properties() {
  return (
    <PropertyBar role="toolbar" aria-label="Properties">
      <BoxButton $w={30} aria-label="Tool preset"><Icon name="rPolylength" size={14} /><Chevron size={7} /></BoxButton>
      <Field>
        <span>Line:</span>
        <BoxButton aria-label="Line colour"><Swatch $color="#008000" $edge="#4c9a4c" /></BoxButton>
      </Field>
      <SpinBox width={41} value="100%" label="Opacity" />
      <BoxButton $w={77} aria-label="Line style"><Stroke $w={54} /><Chevron /></BoxButton>
      <SpinBox width={56} value="12.00 pt" label="Line width" />
      <Field>
        <span>Start:</span>
        <BoxButton $w={37} aria-label="Line start"><Stroke $w={12} /><Chevron /></BoxButton>
      </Field>
      <Field>
        <span>End:</span>
        <BoxButton $w={37} aria-label="Line end"><Stroke $w={12} /><Chevron /></BoxButton>
      </Field>
      <BoxButton aria-label="Highlight"><Icon name="penYellow" size={14} /></BoxButton>
      <BoxButton aria-label="Curve"><Icon name="curve" size={14} /></BoxButton>
      <Picker id="Units" width={42} value="Units" />
      <BoxButton $w={30} aria-label="Alignment"><Icon name="align" size={13} /><Chevron size={7} /></BoxButton>
      <Field>
        <label htmlFor="Font">Font:</label>
        <Picker id="Font" width={101} value="Times-Roman" />
      </Field>
      <SplitFrame $w={34}>
        <select aria-label="Font size"><option>8</option></select>
        <Chevron />
      </SplitFrame>
      <BoxButton aria-label="Font colour"><Swatch $color="#000" $edge="#d0d0d0" /></BoxButton>
      <Picker id="Style" width={41} value="Style" />
      <Field>
        <label htmlFor="Totals">Totals:</label>
        <Picker id="Totals" width={77} value={'Length = 22\'-3"'} />
      </Field>
    </PropertyBar>
  );
}

function ToolChest() {
  return (
    <ChestPanel>
      <PanelTitle>Tool Chest <Chevron /></PanelTitle>
      <ChestBody>
        <ChestList>
          <GroupHeader $open>
            <button><Chevron />ZenEstimate HVAC - Rectangular Duct</button>
            <GearButton aria-label="Settings"><Icon name="gear" size={14} /></GearButton>
          </GroupHeader>
          <ToolTable>
            <colgroup><col width="29" /><col width="85" /><col width="84" /><col /></colgroup>
            <thead>
              <tr><th aria-label="Tool" /><th>Subject</th><th>Comment</th><th>Label</th></tr>
            </thead>
            <tbody>
              {sizes.flatMap((s) => [false, true].map((v) => (
                <tr key={`${s}${v}`}>
                  <td><DuctThumb vertical={v} size={s} /></td>
                  <td>{`${s}"  Rect`}</td>
                  <td />
                  <td>{`${s}" Duct${v ? ' (Vert)' : ''}`}</td>
                </tr>
              )))}
            </tbody>
          </ToolTable>
          {otherGroups.map((g) => (
            <GroupHeader key={g}>
              <button><Chevron to="right" />{`ZenEstimate HVAC - ${g}`}</button>
              <GearButton aria-label="Settings"><Icon name="gear" size={14} /></GearButton>
              <Flyout aria-label="More"><Chevron to="right" /></Flyout>
            </GroupHeader>
          ))}
        </ChestList>
        <ScrollV $w={12}>
          <button aria-label="Scroll up"><Chevron to="up" size={6} /></button>
          <ThumbV $grow={53} />
          <Gap $grow={47} />
          <button aria-label="Scroll down"><Chevron size={6} /></button>
        </ScrollV>
      </ChestBody>
      <SizeRow>
        <Svg width="7" height="7" viewBox="0 0 8 8"><path d="M4 1L7.500 7H0.500Z" /></Svg>
        <input type="range" aria-label="Symbol size" min="0" max="100" defaultValue="0" />
        <Svg width="11" height="10" viewBox="0 0 11 10"><path d="M5.500 1L10.500 9H0.500Z" /></Svg>
      </SizeRow>
    </ChestPanel>
  );
}

function DocumentView() {
  const tool = (name: string, extra: { $active?: boolean; $dim?: boolean } = {}) => (
    <ToolButton aria-label={name} {...extra}><Icon name={name} size={14} /></ToolButton>
  );
  return (
    <DocPanel>
      <TabStrip>
        <Tab>HVAC Example Plan*<button aria-label="Close tab"><Cross /></button></Tab>
        <button aria-label="Open tabs"><Chevron /></button>
      </TabStrip>
      <Viewport>
        <Plan />
        <ScrollV $w={11}>
          <button aria-label="Scroll up"><Chevron to="up" size={6} /></button>
          <Gap $grow={63} />
          <ThumbV $grow={10} />
          <Gap $grow={27} />
          <button aria-label="Scroll down"><Chevron size={6} /></button>
        </ScrollV>
      </Viewport>
      <NavBar>
        {tool('single', { $dim: true })}
        {tool('splitV')}
        {tool('splitH')}
        <Divider />
        {tool('fitPage')}
        {tool('fitWidth')}
        <Gap $grow={126} />
        {tool('hand', { $active: true })}
        {tool('select')}
        {tool('selectText')}
        {tool('zoom')}
        {tool('first', { $dim: true })}
        {tool('prev', { $dim: true })}
        <PageInput aria-label="Page" defaultValue="1 of 1" />
        {tool('next', { $dim: true })}
        {tool('last', { $dim: true })}
        <Divider />
        {tool('back')}
        {tool('forward', { $dim: true })}
        <Gap $grow={151} />
        <NavInfo>17.00 x 11.00 in</NavInfo>
        <NavInfo>0.08333 in = 1'-6"</NavInfo>
      </NavBar>
    </DocPanel>
  );
}

function MarkupsTable() {
  return (
    <Grid>
      <colgroup>{columns.map((col) => <col key={col.title} width={col.width} />)}</colgroup>
      <thead>
        <tr>
          {columns.map((col, i) => (
            <HeadCell key={col.title}>
              {i === 0 ? (
                <SortHead>
                  <button aria-label="Collapse all">
                    <Svg width="8" height="8" viewBox="0 0 8 8"><path d="M0.500 0.500H7.500V7.500H0.500ZM2 4H6" /></Svg>
                  </button>
                  {col.title}
                  <Chevron to="up" />
                </SortHead>
              ) : col.title}
            </HeadCell>
          ))}
        </tr>
      </thead>
      <tbody>
        <Row $kind="group">
          <Cell><TreeLabel $gap={7} $indent={5}><Chevron /><span>{'12"  Rect (1)'}</span></TreeLabel></Cell>
          <Cell /><Cell $align="right">22'-3"</Cell><Cell /><Cell /><Cell $align="right">50.82</Cell>
          <Cell /><Cell /><Cell /><Cell /><Cell /><Cell /><Cell /><Cell $align="right">$22.29</Cell>
          <Cell /><Cell /><Cell /><Cell />
        </Row>
        <Row $kind="selected">
          <Cell><TreeLabel $gap={1} $indent={29}><Icon name="rPolylength" size={14} /><span>{'12"  Rect'}</span></TreeLabel></Cell>
          <Cell>12" Duct</Cell>
          <Cell $align="right">22'-3"</Cell>
          <Cell><Spread><span>12x12</span><span>4.00</span></Spread></Cell>
          <Cell>18 Ga. Alum</Cell>
          <Cell $align="right">50.82</Cell>
          <Cell $align="right">1.00</Cell>
          <Cell>
            <HourEditor>
              <HourSpin>
                <button aria-label="More hours"><Chevron to="up" size={4} /></button>
                <button aria-label="Fewer hours"><Chevron size={4} /></button>
              </HourSpin>
              <input aria-label="Estimated hours" defaultValue="1" />
              <Caret />
            </HourEditor>
          </Cell>
          <Cell>
            <Pointer width="9" height="13" viewBox="0 0 9 13" aria-hidden="true">
              <path d="M0.500 0.500V10.500L2.800 8.500L4.500 12.200L6.200 11.500L4.600 8H8Z" fill="#fff" stroke="#111" strokeWidth="0.500" />
            </Pointer>
          </Cell>
          <Cell /><Cell />
          <Cell><Spread><span>None</span><span>1.00</span></Spread></Cell>
          <Cell $align="right">$22.29</Cell>
          <Cell $align="right">$22.29</Cell>
          <Cell><Tick type="checkbox" aria-label="Delivered" /></Cell>
          <Cell />
          <Cell><Tick type="checkbox" aria-label="Returned" /></Cell>
          <Cell />
        </Row>
        <Row $kind="empty">{columns.map((col) => <Cell key={col.title} />)}</Row>
      </tbody>
    </Grid>
  );
}

export default function App() {
  return (
    <Shell>
      <GlobalStyle />
      <MenuBar>
        <MenuList>{menus.map((m) => <button key={m}>{m}</button>)}</MenuList>
        <WindowButtons>
          <button aria-label="Minimize"><Svg width="8" height="8" viewBox="0 0 8 8"><path d="M0 4H8" /></Svg></button>
          <button aria-label="Restore"><Svg width="8" height="8" viewBox="0 0 8 8"><path d="M0.500 2.500H5.500V7.500H0.500ZM2.500 2.500V0.500H7.500V5.500H5.500" /></Svg></button>
          <button aria-label="Close"><Cross /></button>
        </WindowButtons>
      </MenuBar>
      <MainToolbar />
      <Properties />
      <Workspace>
        <Rail aria-label="Panels">
          {['fileCabinet', 'thumbs', 'layers', 'toolbox', 'places', 'editList', 'shapes'].map((n) => (
            <RailButton key={n} aria-label={n} $active={n === 'toolbox'}><Icon name={n} size={14} /></RailButton>
          ))}
        </Rail>
        <ToolChest />
        <DocumentView />
        <RightRail aria-label="More panels">
          {['profile', 'rulerPanel', 'bookmark', 'compare', 'search'].map((n) => (
            <RailButton key={n} aria-label={n} $active={n === 'profile'}><Icon name={n} size={14} /></RailButton>
          ))}
        </RightRail>
      </Workspace>
      <Markups>
        <Rail aria-label="Lists">
          <RailButton aria-label="Expand"><DoubleChevron to="right" /></RailButton>
          {['list', 'model', 'script'].map((n) => (
            <RailButton key={n} aria-label={n} $active={n === 'list'}><Icon name={n} size={14} /></RailButton>
          ))}
        </Rail>
        <MarkupsBody>
          <MarkupsBar>
            <PanelTitle>Markups List <Chevron /></PanelTitle>
            <HideButton aria-label="Hide markups"><Icon name="eyeOff" size={14} /></HideButton>
            <SearchBox>
              <Icon name="search" size={11} />
              <input aria-label="Search markups" placeholder="Search" />
              <Cross />
            </SearchBox>
            <FilterButton><Icon name="filter" size={12} />Filter List</FilterButton>
            <button aria-label="Export"><Icon name="share" size={13} /></button>
            <Grow />
            <button aria-label="Collapse"><DoubleChevron to="left" /></button>
          </MarkupsBar>
          <GridFrame><MarkupsTable /></GridFrame>
          <ScrollH>
            <button aria-label="Scroll left"><Chevron to="left" size={7} /></button>
            <ThumbH />
            <button aria-label="Scroll right"><Chevron to="right" size={7} /></button>
          </ScrollH>
        </MarkupsBody>
      </Markups>
      <StatusBar>
        <span>Drag control points to resize, or drag polyline to move</span>
        <Grow />
        {['grid', 'gridSnap', 'pageSnap', 'markupSnap', 'curveSnap', 'sync'].map((n) => (
          <ToolButton key={n} aria-label={n} $active={n === 'pageSnap' || n === 'markupSnap' || n === 'curveSnap'}>
            <Icon name={n} size={14} />
          </ToolButton>
        ))}
        <button aria-label="Sync options"><Chevron /></button>
        <StatusInfo>0.08333 in = 1'-6"</StatusInfo>
        <StatusInfo>17.00 x 11.00 in</StatusInfo>
        <Coordinates>(6.22, 8.10)</Coordinates>
      </StatusBar>
      <Taskbar>
        <Apps>
          {apps.map((a) => (
            <AppButton key={a.name} aria-label={a.name} $open={a.open} $front={a.front}>
              <svg width="16" height="16" viewBox="0 0 16 16" aria-hidden="true">{a.art}</svg>
            </AppButton>
          ))}
        </Apps>
        <Clock>1:37 PM<br />1/20/2021</Clock>
      </Taskbar>
    </Shell>
  );
}
